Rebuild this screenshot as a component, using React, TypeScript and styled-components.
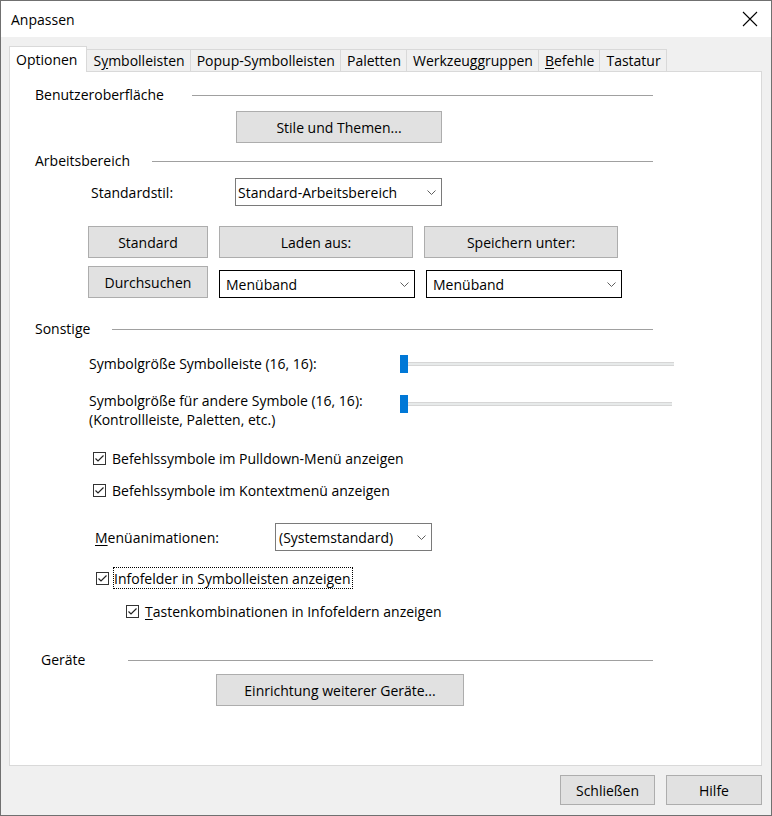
import React from "react";
import styled, { createGlobalStyle, css } from "styled-components";

const GlobalStyle = createGlobalStyle`
  html, body {
    margin: 0;
    padding: 0;
    background: #5a5a5a;
  }
  body {
    font-family: "Open Sans", "Noto Sans", sans-serif;
    font-size: 14px;
    line-height: 19px;
    color: #000;
  }
  u {
    text-decoration: underline;
    text-underline-offset: 2px;
  }
`;

const Window = styled.div`
  width: 772px;
  height: 816px;
  box-sizing: border-box;
  border: 1px solid #707070;
  background: #f0f0f0;
  display: flex;
  flex-direction: column;
`;

const TitleBar = styled.div`
  height: 36px;
  flex: none;
  background: #fff;
  display: flex;
  align-items: center;
  justify-content: space-between;
  padding: 0 13px 0 10px;
`;

const Title = styled.span`
  font-size: 14px;
`;

const Body = styled.div`
  padding: 9px 9px 0 8px;
  display: flex;
  flex-direction: column;
`;

const TabStrip = styled.div`
  display: flex;
  align-items: flex-end;
  height: 26px;
  margin-bottom: -1px;
  position: relative;
  z-index: 1;
`;

const Tab = styled.div<{ $active?: boolean }>`
  box-sizing: border-box;
  padding: 1px 5px 0 6px;
  height: 23px;
  border: 1px solid #d9d9d9;
  margin-right: -1px;
  background: #f0f0f0;
  white-space: nowrap;
  ${(p) =>
    p.$active &&
    css`
      height: 26px;
      padding: 3px 9px 0 6px;
      background: #fff;
      border-bottom: none;
      position: relative;
      z-index: 2;
    `}
`;

const Panel = styled.div`
  height: 695px;
  box-sizing: border-box;
  background: #fff;
  border: 1px solid #d9d9d9;
  display: flex;
  flex-direction: column;
  align-items: flex-start;
`;

const Header = styled.div<{ $top: number; $left: number }>`
  align-self: stretch;
  display: flex;
  align-items: center;
  height: 20px;
  margin: ${(p) => p.$top}px 108px 0 ${(p) => p.$left}px;
`;

const Rule = styled.div<{ $gap: number }>`
  flex: 1;
  height: 1px;
  margin: 2px 0 0 ${(p) => p.$gap}px;
  background: #a0a0a0;
`;

const Row = styled.div<{ $top: number; $left: number; $gap?: number; $align?: string }>`
  display: flex;
  align-items: ${(p) => p.$align || "center"};
  gap: ${(p) => p.$gap || 0}px;
  margin: ${(p) => p.$top}px 0 0 ${(p) => p.$left}px;
`;

const Button = styled.button<{ $w: number; $h?: number }>`
  box-sizing: border-box;
  width: ${(p) => p.$w}px;
  height: ${(p) => p.$h || 32}px;
  border: 1px solid #adadad;
  background: #e1e1e1;
  font: inherit;
  color: #000;
  padding: 0;
  flex: none;
`;

const Label = styled.span<{ $w?: number }>`
  width: ${(p) => (p.$w ? `${p.$w}px` : "auto")};
  flex: none;
`;

const Combo = styled.div<{ $w: number; $dark?: boolean; $pad: number }>`
  box-sizing: border-box;
  width: ${(p) => p.$w}px;
  height: 28px;
  border: 1px solid ${(p) => (p.$dark ? "#000" : "#7a7a7a")};
  background: #fff;
  display: flex;
  align-items: center;
  justify-content: space-between;
  padding: 0 5px 0 ${(p) => p.$pad}px;
  flex: none;
`;

const Slider = styled.div<{ $w: number; $top?: number }>`
  width: ${(p) => p.$w}px;
  height: 18px;
  margin-top: ${(p) => p.$top || 0}px;
  display: flex;
  align-items: center;
  flex: none;
`;

const Thumb = styled.div`
  width: 8px;
  height: 18px;
  background: #0078d7;
  flex: none;
`;

const Track = styled.div`
  flex: 1;
  height: 4px;
  box-sizing: border-box;
  background: #e7eaea;
  border-top: 1px solid #d6d6d6;
  border-bottom: 1px solid #d6d6d6;
`;

const Check = styled.span`
  box-sizing: border-box;
  width: 13px;
  height: 13px;
  border: 1px solid #333;
  background: #fff;
  display: flex;
  flex: none;
`;

const FocusText = styled.span`
  border: 1px dotted #000;
  padding: 1px 1px 0 0;
`;

const Footer = styled.div`
  display: flex;
  justify-content: flex-end;
  gap: 11px;
  padding: 9px 9px 10px 0;
`;

const Chevron = () => (
  <svg width="9" height="5" viewBox="0 0 9 5">
    <polyline points="0.5,0.5 4.5,4.5 8.5,0.5" fill="none" stroke="#5f5f5f" strokeWidth="1" />
  </svg>
);

const CheckBox = () => (
  <Check>
    <svg width="11" height="11" viewBox="0 0 11 11">
      <polyline points="1.5,5.5 4,8 9.5,2.5" fill="none" stroke="#222" strokeWidth="1.2" />
    </svg>
  </Check>
);

const CloseIcon = () => (
  <svg width="16" height="16" viewBox="0 0 16 16">
    <path d="M1 1 L15 15 M15 1 L1 15" stroke="#000" strokeWidth="1.1" />
  </svg>
);

const Dropdown = ({ w, pad, dark, children }: { w: number; pad: number; dark?: boolean; children: React.ReactNode }) => (
  <Combo $w={w} $pad={pad} $dark={dark}>
    <span>{children}</span>
    <Chevron />
  </Combo>
);

export default function App() {
  return (
    <>
      <GlobalStyle />
      <Window>
        <TitleBar>
          <Title>Anpassen</Title>
          <CloseIcon />
        </TitleBar>
        <Body>
          <TabStrip>
            <Tab $active>Optionen</Tab>
            <Tab>
              S<u>y</u>mbolleisten
            </Tab>
            <Tab>Popup-Symbolleisten</Tab>
            <Tab>Paletten</Tab>
            <Tab>Werkzeuggruppen</Tab>
            <Tab>
              <u>B</u>efehle
            </Tab>
            <Tab>Tastatur</Tab>
          </TabStrip>
          <Panel>
            <Header $top={12} $left={25}>
              <span>Benutzeroberfläche</span>
              <Rule $gap={28} />
            </Header>
            <Row $top={7} $left={226}>
              <Button $w={206}>Stile und Themen...</Button>
            </Row>

            <Header $top={7} $left={25}>
              <span>Arbeitsbereich</span>
              <Rule $gap={22} />
            </Header>
            <Row $top={8} $left={81}>
              <Label $w={144}>Standardstil:</Label>
              <Dropdown w={207} pad={2}>Standard-Arbeitsbereich</Dropdown>
            </Row>
            <Row $top={20} $left={78} $gap={11}>
              <Button $w={120}>Standard</Button>
              <Button $w={194}>Laden aus:</Button>
              <Button $w={194}>Speichern unter:</Button>
            </Row>
            <Row $top={8} $left={78} $gap={11} $align="flex-end">
              <Button $w={120}>Durchsuchen</Button>
              <Dropdown w={196} pad={6} dark>Menüband</Dropdown>
              <Dropdown w={196} pad={6} dark>Menüband</Dropdown>
            </Row>

            <Header $top={20} $left={25}>
              <span>Sonstige</span>
              <Rule $gap={22} />
            </Header>
            <Row $top={16} $left={79}>
              <Label $w={311}>Symbolgröße Symbolleiste (16, 16):</Label>
              <Slider $w={274}>
                <Thumb />
                <Track />
              </Slider>
            </Row>
            <Row $top={18} $left={79} $align="flex-start">
              <Label $w={311}>
                Symbolgröße für andere Symbole (16, 16):
                <br />
                (Kontrollleiste, Paletten, etc.)
              </Label>
              <Slider $w={272} $top={4}>
                <Thumb />
                <Track />
              </Slider>
            </Row>

            <Row $top={20} $left={83} $gap={6}>
              <CheckBox />
              <span>Befehlssymbole im Pulldown-Menü anzeigen</span>
            </Row>
            <Row $top={13} $left={83} $gap={6}>
              <CheckBox />
              <span>Befehlssymbole im Kontextmenü anzeigen</span>
            </Row>
            <Row $top={23} $left={85}>
              <Label $w={180}>
                <u>M</u>enüanimationen:
              </Label>
              <Dropdown w={157} pad={3}>(Systemstandard)</Dropdown>
            </Row>
            <Row $top={16} $left={86} $gap={4}>
              <CheckBox />
              <FocusText>Infofelder in Symbolleisten anzeigen</FocusText>
            </Row>
            <Row $top={13} $left={116} $gap={6}>
              <CheckBox />
              <span>
                <u>T</u>astenkombinationen in Infofeldern anzeigen
              </span>
            </Row>

            <Header $top={28} $left={31}>
              <span>Geräte</span>
              <Rule $gap={43} />
            </Header>
            <Row $top={5} $left={206}>
              <Button $w={248}>Einrichtung weiterer Geräte...</Button>
            </Row>
          </Panel>
        </Body>
        <Footer>
          <Button $w={95} $h={30}>Schließen</Button>
          <Button $w={96} $h={30}>Hilfe</Button>
        </Footer>
      </Window>
    </>
  );
}
